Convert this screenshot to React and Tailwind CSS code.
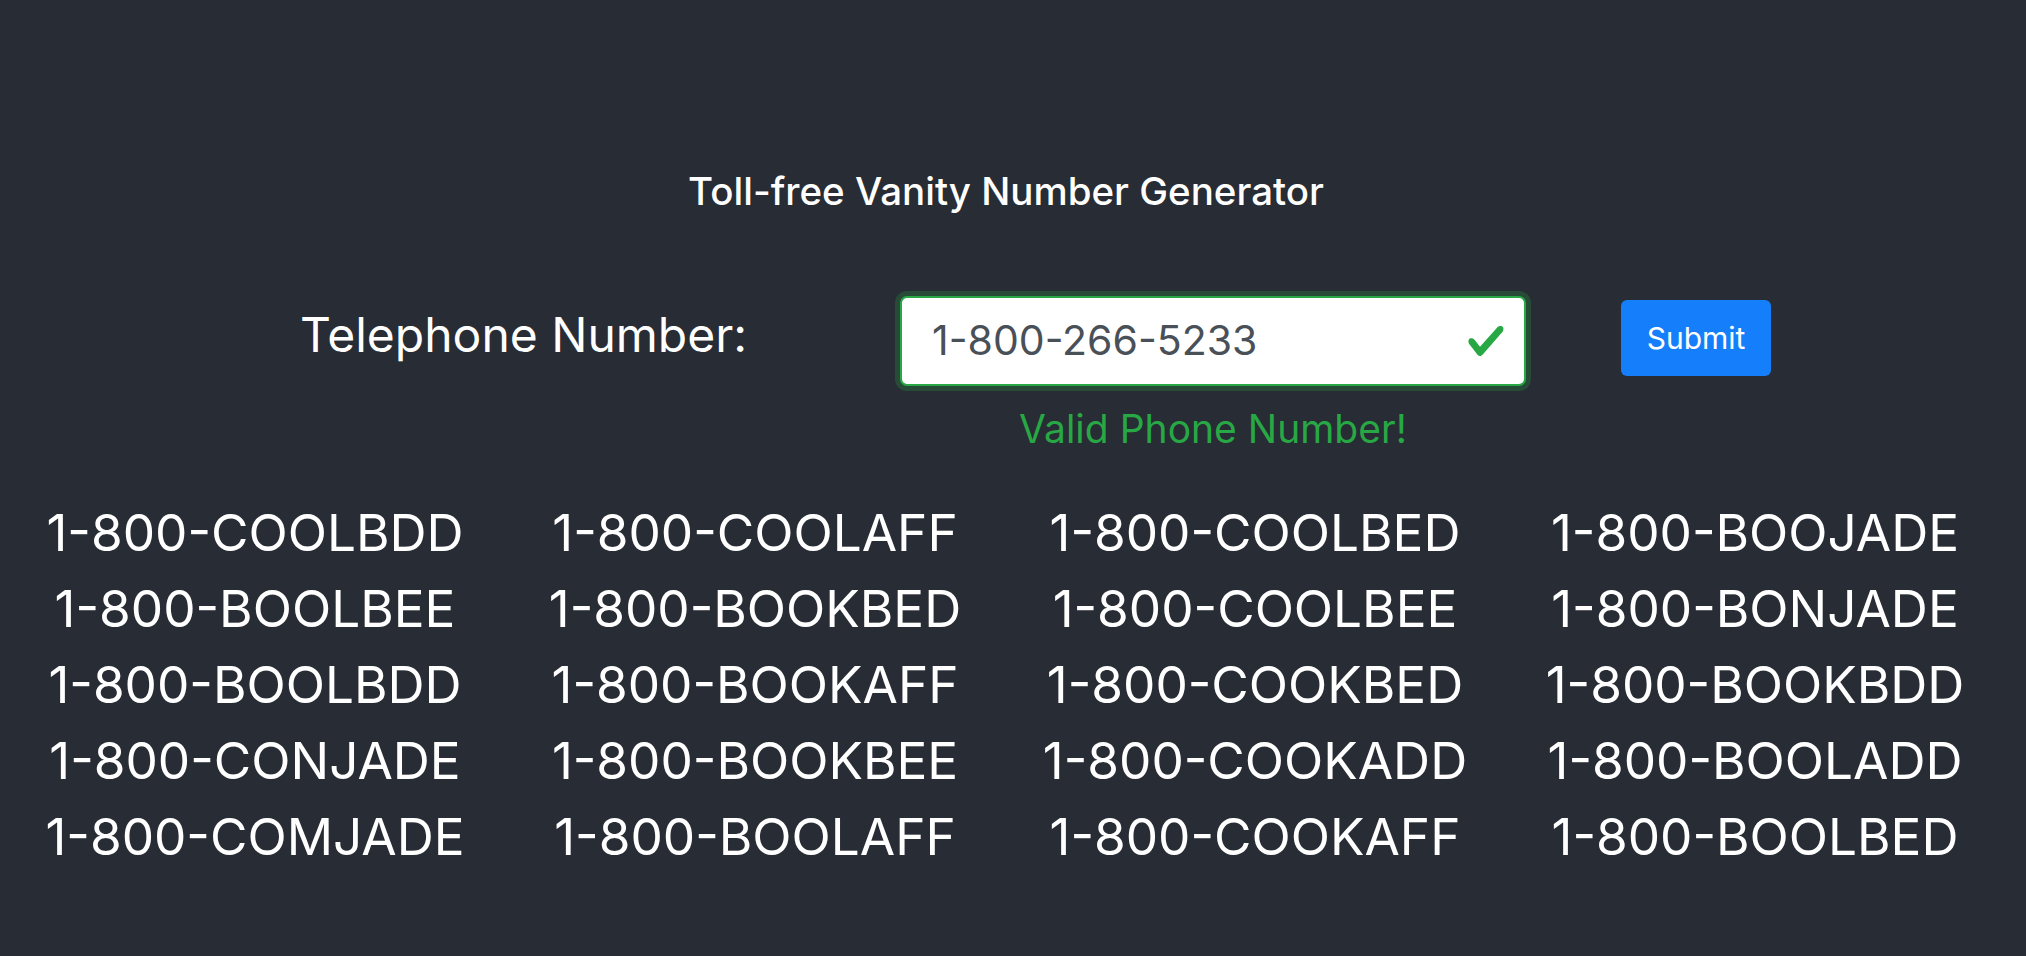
import React from "react";

const rows = [
  ["1-800-COOLBDD", "1-800-COOLAFF", "1-800-COOLBED", "1-800-BOOJADE"],
  ["1-800-BOOLBEE", "1-800-BOOKBED", "1-800-COOLBEE", "1-800-BONJADE"],
  ["1-800-BOOLBDD", "1-800-BOOKAFF", "1-800-COOKBED", "1-800-BOOKBDD"],
  ["1-800-CONJADE", "1-800-BOOKBEE", "1-800-COOKADD", "1-800-BOOLADD"],
  ["1-800-COMJADE", "1-800-BOOLAFF", "1-800-COOKAFF", "1-800-BOOLBED"],
];

export default function App() {
  return (
    <div
      className="min-h-screen w-full bg-[#282c34] text-white"
      style={{ fontFamily: "Inter, 'Open Sans', sans-serif" }}
    >
      <div className="pt-[168px] pr-[14px] text-center text-[38.5px] leading-[46px] font-medium">
        Toll-free Vanity Number Generator
      </div>

      <div className="mt-[82px] flex items-start">
        <div className="ml-[300px] mt-[15px] w-[446px] text-[48px] leading-[48px] whitespace-nowrap">
          Telephone Number:
        </div>
        <div className="ml-[154px] flex flex-col items-center">
          <div className="relative h-[90px] w-[626px] rounded-[7px] border-2 border-[#28a745] bg-white shadow-[0_0_0_5px_rgba(40,167,69,0.25)]">
            <div className="flex h-full items-center pl-[30px] text-[41px] text-[#495057]">
              1-800-266-5233
            </div>
            <svg
              className="absolute right-[18px] top-1/2 -translate-y-1/2"
              width="40"
              height="40"
              viewBox="0 0 8 8"
            >
              <path
                fill="#28a745"
                d="M2.3 6.73L.6 4.53c-.4-1.04.46-1.4 1.1-.8l1.1 1.4 3.4-3.8c.6-.63 1.6-.27 1.2.7l-4 4.6c-.43.5-.8.4-1.1.1z"
              />
            </svg>
          </div>
          <div className="mt-[20px] text-[39px] leading-[46px] text-[#28a745]">
            Valid Phone Number!
          </div>
        </div>
        <button className="ml-[95px] mt-[4px] h-[76px] w-[150px] rounded-[6px] bg-[#157ffb] text-[30px] text-white">
          Submit
        </button>
      </div>

      <div className="mt-[42px] ml-[5px] grid w-[2000px] grid-cols-4 text-center text-[51.3px] leading-[76px]">
        {rows.flat().map((t, i) => (
          <div key={i}>{t}</div>
        ))}
      </div>
    </div>
  );
}
